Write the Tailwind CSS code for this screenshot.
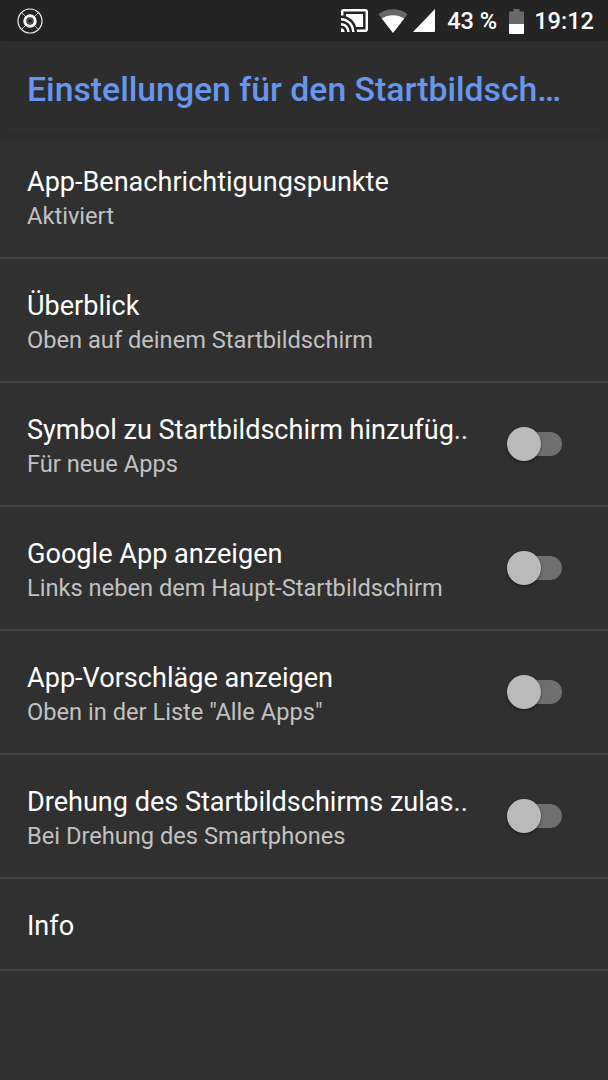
<!DOCTYPE html>
<html lang="de">

<head>
  <meta charset="utf-8">
  <title>Einstellungen für den Startbildschirm</title>
  <meta name="viewport" content="width=device-width, initial-scale=1.0">
  <script src="https://cdn.jsdelivr.net/npm/@tailwindcss/browser@4"></script>
</head>

<body class="min-h-screen overflow-hidden bg-[#303030] font-['Roboto',sans-serif] text-white">

  <!-- Status bar -->
  <div class="flex h-[41px] items-center justify-between bg-[#242424] pl-[17px] pr-[14px]">
    <svg class="size-[26px]" viewBox="0 0 26 26" fill="none" stroke="#eee">
      <circle cx="13" cy="13" r="12" stroke-width="1.2" />
      <path d="M4.800 4.800l4 4M21.200 4.800l-4 4M4.800 21.200l4-4M21.200 21.200l-4-4" stroke="#bbb" stroke-width="1" />
      <circle cx="13" cy="13" r="5.2" stroke="#fff" stroke-width="3" />
      <circle cx="13" cy="13" r="2.5" stroke="#777" stroke-width=".7" />
    </svg>

    <div class="flex items-center">
      <!-- Cast -->
      <svg class="h-[23px] w-[27px]" viewBox="1 3 22 18" preserveAspectRatio="none" fill="#fff">
        <path d="M1 18v3h3c0-1.66-1.34-3-3-3zm0-4v2c2.76 0 5 2.24 5 5h2c0-3.87-3.13-7-7-7zm18-7H5v1.63c3.96 1.28 7.09 4.41 8.37 8.37H19V7zM1 10v2c4.97 0 9 4.03 9 9h2c0-6.08-4.93-11-11-11zm20-7H3c-1.1 0-2 .9-2 2v3h2V5h18v14h-7v2h7c1.1 0 2-.9 2-2V5c0-1.1-.9-2-2-2z" />
      </svg>
      <!-- Wi-Fi -->
      <svg class="ml-[10px] h-[24px] w-[30px]" viewBox="0 0 30 24" fill="#fff">
        <path d="M15 24L.5 5.2C8-1.4 22-1.4 29.500 5.2z" fill="#686868" />
        <path d="M15 24L3.800 9.500C10 5 20 5 26.200 9.500z" />
      </svg>
      <!-- Signal -->
      <svg class="ml-[5px] h-[23px] w-[22px]" viewBox="0 0 22 23" fill="#fff">
        <path d="M0 23L22 0V22a1 1 0 0 1-1 1z" />
      </svg>
      <span class="ml-[12px] mt-[2px] w-[62px] whitespace-nowrap text-[23.6px] font-medium leading-[39px]">43 %</span>
      <!-- Battery -->
      <svg class="mt-px h-[25px] w-[15px]" viewBox="0 0 15 25">
        <path d="M4.500 0h6v2.500H14a1 1 0 0 1 1 1V15H0V3.500a1 1 0 0 1 1-1h3.500z" fill="#6a6a6a" />
        <path d="M0 15h15v9a1 1 0 0 1-1 1H1a1 1 0 0 1-1-1z" fill="#fff" />
      </svg>
      <span class="ml-[10px] mt-[2px] whitespace-nowrap text-[23.6px] font-medium leading-[39px]">19:12</span>
    </div>
  </div>

  <!-- Title bar -->
  <header class="relative flex h-[94px] items-center bg-[#2d2d2d] px-[27px] pt-[3px] shadow-[0_2px_5px_rgba(0,0,0,0.2)]">
    <h1 class="whitespace-nowrap text-[33.75px] font-medium leading-10 text-[#6796ee]">Einstellungen für den Startbildsch…</h1>
  </header>

  <!-- Preferences -->
  <ul>
    <li class="flex h-[124px] items-start border-b-2 border-[#444] pl-[27px] pr-[45px] pt-[30px]">
      <div class="flex-1 whitespace-nowrap leading-[34px]">
        <p class="text-[27.05px]">App-Benachrichtigungspunkte</p>
        <p class="text-[23.65px] text-[#c1c1c1]">Aktiviert</p>
      </div>
    </li>
    <li class="flex h-[124px] items-start border-b-2 border-[#444] pl-[27px] pr-[45px] pt-[30px]">
      <div class="flex-1 whitespace-nowrap leading-[34px]">
        <p class="text-[27.05px]">Überblick</p>
        <p class="text-[23.65px] text-[#c1c1c1]">Oben auf deinem Startbildschirm</p>
      </div>
    </li>
    <li class="flex h-[124px] items-start border-b-2 border-[#444] pl-[27px] pr-[45px] pt-[30px]">
      <div class="flex-1 whitespace-nowrap leading-[34px]">
        <p class="text-[27.05px]">Symbol zu Startbildschirm hinzufüg..</p>
        <p class="text-[23.65px] text-[#c1c1c1]">Für neue Apps</p>
      </div>
      <button role="switch" aria-checked="false" aria-label="Symbol hinzufügen" class="mt-[14px] flex h-[34px] w-[56px] items-center">
        <span class="size-[34px] shrink-0 rounded-full bg-[#bababa] shadow-[0_1px_3px_rgba(0,0,0,0.5)]"></span>
        <span class="-ml-[17px] -z-10 h-[24px] w-[38px] rounded-r-full bg-[#6f6f6f]"></span>
      </button>
    </li>
    <li class="flex h-[124px] items-start border-b-2 border-[#444] pl-[27px] pr-[45px] pt-[30px]">
      <div class="flex-1 whitespace-nowrap leading-[34px]">
        <p class="text-[27.1px]">Google App anzeigen</p>
        <p class="text-[23.65px] text-[#c1c1c1]">Links neben dem Haupt-Startbildschirm</p>
      </div>
      <button role="switch" aria-checked="false" aria-label="Google App" class="mt-[14px] flex h-[34px] w-[56px] items-center">
        <span class="size-[34px] shrink-0 rounded-full bg-[#bababa] shadow-[0_1px_3px_rgba(0,0,0,0.5)]"></span>
        <span class="-ml-[17px] -z-10 h-[24px] w-[38px] rounded-r-full bg-[#6f6f6f]"></span>
      </button>
    </li>
    <li class="flex h-[124px] items-start border-b-2 border-[#444] pl-[27px] pr-[45px] pt-[30px]">
      <div class="flex-1 whitespace-nowrap leading-[34px]">
        <p class="text-[27.1px]">App-Vorschläge anzeigen</p>
        <p class="text-[23.65px] text-[#c1c1c1]">Oben in der Liste "Alle Apps"</p>
      </div>
      <button role="switch" aria-checked="false" aria-label="App-Vorschläge" class="mt-[14px] flex h-[34px] w-[56px] items-center">
        <span class="size-[34px] shrink-0 rounded-full bg-[#bababa] shadow-[0_1px_3px_rgba(0,0,0,0.5)]"></span>
        <span class="-ml-[17px] -z-10 h-[24px] w-[38px] rounded-r-full bg-[#6f6f6f]"></span>
      </button>
    </li>
    <li class="flex h-[124px] items-start border-b-2 border-[#444] pl-[27px] pr-[45px] pt-[30px]">
      <div class="flex-1 whitespace-nowrap leading-[34px]">
        <p class="text-[27.05px]">Drehung des Startbildschirms zulas..</p>
        <p class="text-[23.65px] text-[#c1c1c1]">Bei Drehung des Smartphones</p>
      </div>
      <button role="switch" aria-checked="false" aria-label="Drehung" class="mt-[14px] flex h-[34px] w-[56px] items-center">
        <span class="size-[34px] shrink-0 rounded-full bg-[#bababa] shadow-[0_1px_3px_rgba(0,0,0,0.5)]"></span>
        <span class="-ml-[17px] -z-10 h-[24px] w-[38px] rounded-r-full bg-[#6f6f6f]"></span>
      </button>
    </li>
    <li class="h-[92px] border-b-2 border-[#444] px-[27px] pt-[30px]">
      <p class="text-[27.05px] leading-[34px]">Info</p>
    </li>
  </ul>

</body>
</html>
